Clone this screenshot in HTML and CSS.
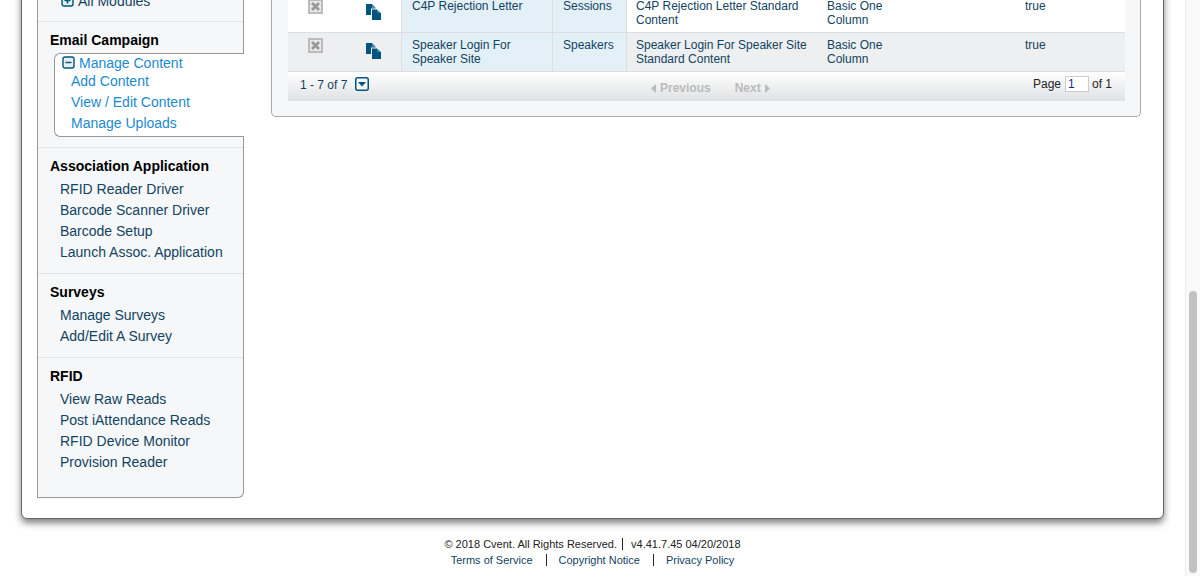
FILE: index.html
```html
<!DOCTYPE html>
<html>
<head>
  <meta charset="utf-8" />
  <title>Cvent - Manage Content</title>
  <link rel="stylesheet" href="styles.css">
</head>
<body>
  <div class="page">
    <div class="shell">
      <div class="sidebar">
        <div class="nav-top">
          <svg class="tree-icon" viewBox="0 0 13 13"><rect x="1" y="1" width="11" height="11" rx="2" fill="#e6eef3" stroke="#005580" stroke-width="1.4"/><path d="M3.5 6.5h6M6.5 3.5v6" stroke="#005580" stroke-width="1.5"/></svg>
          <a href="#">All Modules</a>
        </div>
        <div class="nav-section">
          <h4>Email Campaign</h4>
          <div class="active-box">
            <div class="active-head">
              <svg class="tree-icon" viewBox="0 0 13 13"><rect x="1" y="1" width="11" height="11" rx="2" fill="#e6eef3" stroke="#005580" stroke-width="1.4"/><path d="M3.5 6.5h6" stroke="#005580" stroke-width="1.5"/></svg>
              <a href="#">Manage Content</a>
            </div>
            <a class="sub-link" href="#">Add Content</a>
            <a class="sub-link" href="#">View / Edit Content</a>
            <a class="sub-link" href="#">Manage Uploads</a>
          </div>
        </div>
        <div class="nav-section">
          <h4>Association Application</h4>
          <a class="nav-link" href="#">RFID Reader Driver</a>
          <a class="nav-link" href="#">Barcode Scanner Driver</a>
          <a class="nav-link" href="#">Barcode Setup</a>
          <a class="nav-link" href="#">Launch Assoc. Application</a>
        </div>
        <div class="nav-section">
          <h4>Surveys</h4>
          <a class="nav-link" href="#">Manage Surveys</a>
          <a class="nav-link" href="#">Add/Edit A Survey</a>
        </div>
        <div class="nav-section nav-last">
          <h4>RFID</h4>
          <a class="nav-link" href="#">View Raw Reads</a>
          <a class="nav-link" href="#">Post iAttendance Reads</a>
          <a class="nav-link" href="#">RFID Device Monitor</a>
          <a class="nav-link" href="#">Provision Reader</a>
        </div>
      </div>

      <div class="panel">
        <table class="grid">
          <colgroup>
            <col class="col-del"><col class="col-copy"><col class="col-name"><col class="col-type"><col class="col-desc"><col class="col-layout"><col>
          </colgroup>
          <tr>
            <td class="cell-del"><svg class="del-icon" viewBox="0 0 15 15"><rect x="1" y="1" width="13" height="13" fill="#e8e8e8" stroke="#bbb" stroke-width="2"/><path d="M4 4l7 7M11 4l-7 7" stroke="#999" stroke-width="2.8"/></svg></td>
            <td class="cell-copy"><svg class="copy-icon" viewBox="0 0 15 16"><path d="M0 0h6v3.500h3.500v1H5V11H0z" fill="#005580"/><path d="M6 0l3.500 3.500H6z" fill="#3f7f9f"/><path d="M6 5.500h5V9h4v7H6z" fill="#005580"/><path d="M11 5.500L15 9h-4z" fill="#3f7f9f"/></svg></td>
            <td class="hl">C4P Rejection Letter</td>
            <td class="hl">Sessions</td>
            <td class="cell-desc">C4P Rejection Letter Standard Content</td>
            <td class="cell-plain">Basic One<br>Column</td>
            <td class="cell-plain">true</td>
          </tr>
          <tr class="alt">
            <td class="cell-del"><svg class="del-icon" viewBox="0 0 15 15"><rect x="1" y="1" width="13" height="13" fill="#e8e8e8" stroke="#bbb" stroke-width="2"/><path d="M4 4l7 7M11 4l-7 7" stroke="#999" stroke-width="2.8"/></svg></td>
            <td class="cell-copy"><svg class="copy-icon" viewBox="0 0 15 16"><path d="M0 0h6v3.500h3.500v1H5V11H0z" fill="#005580"/><path d="M6 0l3.500 3.500H6z" fill="#3f7f9f"/><path d="M6 5.500h5V9h4v7H6z" fill="#005580"/><path d="M11 5.500L15 9h-4z" fill="#3f7f9f"/></svg></td>
            <td class="hl">Speaker Login For Speaker Site</td>
            <td class="hl">Speakers</td>
            <td class="cell-desc">Speaker Login For Speaker Site Standard Content</td>
            <td class="cell-plain">Basic One<br>Column</td>
            <td class="cell-plain">true</td>
          </tr>
        </table>
        <div class="pager">
          <div class="pager-count">
            <span class="count-text">1 - 7 of 7</span>
            <svg class="pager-menu" viewBox="0 0 14 14"><rect x="0.75" y="0.75" width="12.5" height="12.5" rx="2" fill="#f4f6f7" stroke="#005580" stroke-width="1.5"/><path d="M3 5h8l-4 4.500z" fill="#005580"/></svg>
          </div>
          <div class="pager-nav">
            <span class="pager-step"><svg class="arrow" viewBox="0 0 5 9"><path d="M5 0v9L0 4.500z" fill="#bbb"/></svg>Previous</span>
            <span class="pager-step">Next<svg class="arrow" viewBox="0 0 5 9"><path d="M0 0v9l5-4.500z" fill="#bbb"/></svg></span>
          </div>
          <div class="pager-page">
            <span>Page</span><input class="page-input" type="text" value="1"><span class="page-total">of 1</span>
          </div>
        </div>
      </div>
    </div>

    <div class="footer">
      <div class="footer-line"><span>© 2018 Cvent. All Rights Reserved.</span><span>v4.41.7.45 04/20/2018</span></div>
      <div class="footer-line footer-links"><a href="#">Terms of Service</a><a href="#">Copyright Notice</a><a href="#">Privacy Policy</a></div>
    </div>
  </div>

  <div class="scrollbar"><div class="scroll-thumb"></div></div>
</body>
</html>
```

FILE: styles.css
```css
:root {
  --panel-bg: #f5f7f9;
  --link-dark: #12435f;
  --link-bright: #1b8ad0;
  --line: #e1e3e5;
}
html, body {
  margin: 0;
  height: 576px;
  overflow: hidden;
  background: #ffffff;
}
body {
  font-family: "Liberation Sans", Arial, sans-serif;
  color: #12435f;
}
a {
  text-decoration: none;
  color: inherit;
}

.page {
  margin-top: -41px;
  width: 1185px;
}

/* white outer card */
.shell {
  display: flex;
  align-items: flex-start;
  margin-left: 21px;
  width: 1143px;
  box-sizing: border-box;
  background: #ffffff;
  border: 1px solid #666;
  border-radius: 0 0 6px 6px;
  padding: 0 22px 20px 15px;
  box-shadow: 0 4px 7px rgba(0,0,0,0.5);
}

/* left nav */
.sidebar {
  width: 207px;
  flex-shrink: 0;
  box-sizing: border-box;
  background: var(--panel-bg);
  border: 1px solid #999;
  border-top: none;
  border-radius: 0 0 6px 0;
  font-size: 14px;
  color: var(--link-dark);
}
.nav-top {
  display: flex;
  align-items: center;
  gap: 4px;
  height: 21px;
  padding: 30px 0 10px 23px;
}
.tree-icon {
  width: 13px;
  height: 13px;
  flex-shrink: 0;
}
.nav-section {
  border-top: 1px solid var(--line);
  padding: 8px 0 10px;
}
.nav-section h4 {
  margin: 0 0 3px 12px;
  font-size: 14px;
  line-height: 20px;
  font-weight: bold;
  color: #000000;
}
.nav-last {
  padding-bottom: 24px;
}
.nav-link {
  display: block;
  line-height: 21px;
  padding-left: 22px;
}
.active-box {
  margin: 2px -1px 0 16px;
  padding-bottom: 2px;
  background: #ffffff;
  border: 1px solid #999;
  border-right: none;
  border-radius: 6px 0 0 6px;
  color: var(--link-bright);
}
.active-head {
  display: flex;
  align-items: center;
  gap: 4px;
  height: 17px;
  padding-left: 7px;
}
.sub-link {
  display: block;
  line-height: 21px;
  padding-left: 16px;
}

/* content panel */
.panel {
  flex: 1;
  margin-left: 27px;
  box-sizing: border-box;
  background: var(--panel-bg);
  border: 1px solid #aaa;
  border-top: none;
  border-radius: 0 0 5px 5px;
  padding: 34px 15px 15px 16px;
}
.grid {
  width: 837px;
  table-layout: fixed;
  border-collapse: separate;
  border-spacing: 0;
  font-size: 12px;
  line-height: 14px;
  background: #ffffff;
}
.col-del { width: 56px; }
.col-copy { width: 57px; }
.col-name { width: 151px; }
.col-type { width: 74px; }
.col-desc { width: 190px; }
.col-layout { width: 198px; }
.grid td {
  box-sizing: content-box;
  vertical-align: top;
  padding: 5px 11px 0 10px;
  height: 33px;
  border-bottom: 1px solid #dcdee0;
  border-left: 1px solid #dcdee0;
}
.grid td.cell-del, .grid td.cell-copy {
  border-left: none;
}
.grid td.cell-del {
  padding: 5px 0 0 20px;
}
.grid td.cell-copy {
  padding: 10px 0 0 22px;
  height: 28px;
}
.grid td.cell-desc {
  padding: 5px 4px 0 9px;
}
.grid td.cell-plain {
  border-left: none;
  padding-left: 11px;
}
.alt td {
  background: #eeeff1;
}
.grid td.hl {
  background: #e4f0f7;
}
.del-icon {
  display: block;
  width: 15px;
  height: 15px;
}
.copy-icon {
  display: block;
  width: 15px;
  height: 16px;
}

/* pager strip */
.pager {
  display: grid;
  grid-template-columns: 351px auto 1fr;
  height: 29px;
  padding: 0 13px 0 12px;
  font-size: 12px;
  line-height: 14px;
  background: linear-gradient(#ffffff, #dfe1e3);
  color: #222;
}
.pager-count {
  display: flex;
  align-items: flex-start;
  gap: 8px;
  padding-top: 5px;
  color: #12435f;
}
.count-text {
  margin-top: 1px;
}
.pager-menu {
  width: 14px;
  height: 14px;
}
.pager-nav {
  display: flex;
  gap: 24px;
  padding-top: 9px;
  height: 14px;
}
.pager-step {
  display: inline-flex;
  align-items: center;
  gap: 4px;
  font-weight: bold;
  color: #bbbbbb;
}
.arrow {
  width: 5px;
  height: 9px;
}
.pager-page {
  display: flex;
  justify-content: flex-end;
  align-items: flex-start;
  gap: 4px;
  padding-top: 4px;
}
.pager-page span {
  padding-top: 1px;
}
.pager-page .page-total {
  margin-left: -1px;
}
.page-input {
  width: 24px;
  height: 16px;
  box-sizing: border-box;
  margin: 0;
  padding: 0 2px;
  border: 1px solid #ccc;
  background: #fff;
  font: 12px "Liberation Sans", Arial, sans-serif;
  color: #1a2a88;
}

/* page footer */
.footer {
  margin-top: 17px;
  text-align: center;
  font-size: 11px;
  line-height: 16px;
  color: #222;
}
.footer-line span + span {
  margin-left: 5px;
  padding-left: 8px;
  border-left: 1px solid #222;
}
.footer-links {
  color: #12435f;
}
.footer-links a + a {
  margin-left: 13px;
  padding-left: 12px;
  border-left: 1px solid #222;
}

/* browser scrollbar, sits over the page */
.scrollbar {
  position: absolute;
  top: 0;
  right: 0;
  width: 15px;
  height: 576px;
  box-sizing: border-box;
  background: #fafafa;
  border-left: 1px solid #ececec;
}
.scroll-thumb {
  position: absolute;
  top: 291px;
  left: 3px;
  width: 8px;
  height: 282px;
  border-radius: 4px;
  background: #c2c2c2;
}
```
